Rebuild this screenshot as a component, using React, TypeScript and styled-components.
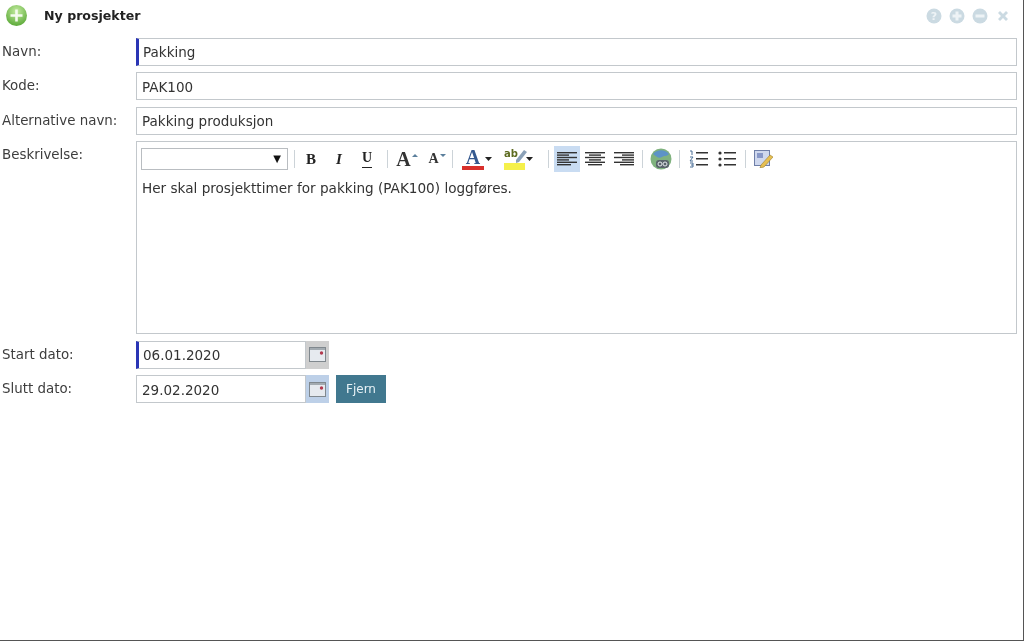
import { ReactNode } from 'react'
import styled, { createGlobalStyle } from 'styled-components'

const GlobalStyle = createGlobalStyle`
  html, body { margin: 0; padding: 0; background: #fff; }
  body { font-family: "DejaVu Sans", Verdana, sans-serif; color: #333; }
`

const Page = styled.div`
  box-sizing: border-box;
  width: 1024px;
  height: 641px;
  overflow: hidden;
  background: #fff;
  border-right: 1px solid #555;
  border-bottom: 1px solid #555;
  filter: blur(0.5px);
`

const TitleBar = styled.header`
  display: flex;
  align-items: center;
  height: 31px;
  padding: 0 12px 0 6px;
`

const TitleText = styled.h1`
  margin: 0 0 0 17px;
  font-size: 12.6px;
  font-weight: 700;
  color: #222;
  flex: 1;
`

const WindowTools = styled.div`
  display: flex;
  gap: 7px;
`

const Form = styled.form`
  display: grid;
  grid-template-columns: 134px 881px;
  row-gap: 6.5px;
  padding: 6.8px 0 0 2px;
`

const Label = styled.label`
  height: 28px;
  font-size: 13.4px;
  line-height: 28px;
  color: #3d3d3d;
`

const InputBox = styled.div<{ $required?: boolean; $width?: number }>`
  box-sizing: border-box;
  height: 28px;
  width: ${p => (p.$width ? `${p.$width}px` : '100%')};
  display: flex;
  align-items: center;
  padding: 1px 0 0 ${p => (p.$required ? '4px' : '5px')};
  background: #fff;
  border: 1px solid #c3c8cc;
  border-left: ${p => (p.$required ? '3px solid #2a35b5' : '1px solid #c3c8cc')};
  font-size: 13.5px;
  color: #333;
`

const EditorBox = styled.div`
  box-sizing: border-box;
  height: 193px;
  border: 1px solid #c3c8cc;
  padding: 3px 4px;
`

const Toolbar = styled.div`
  display: flex;
  align-items: center;
  height: 27px;
`

const FontSelect = styled.div`
  box-sizing: border-box;
  width: 147px;
  height: 22px;
  border: 1px solid #b9bdc1;
  display: flex;
  align-items: center;
  justify-content: flex-end;
  padding-right: 6px;
  font-size: 10px;
  color: #111;
`

const Separator = styled.span<{ $left: number; $right: number }>`
  width: 1px;
  height: 18px;
  background: #ccd3d8;
  margin: 0 ${p => p.$right}px 0 ${p => p.$left}px;
`

const ToolButton = styled.span<{ $width: number; $active?: boolean; $pad?: number }>`
  box-sizing: border-box;
  width: ${p => p.$width}px;
  height: 26px;
  padding-left: ${p => p.$pad ?? 0}px;
  display: flex;
  align-items: center;
  justify-content: center;
  gap: 1px;
  background: ${p => (p.$active ? '#c9dcf2' : 'transparent')};
`

const Glyph = styled.span<{ $size: number; $italic?: boolean; $underline?: boolean; $color?: string }>`
  font-family: "Liberation Serif", serif;
  font-weight: 700;
  font-size: ${p => p.$size}px;
  line-height: 18px;
  font-style: ${p => (p.$italic ? 'italic' : 'normal')};
  color: ${p => p.$color ?? '#222'};
  border-bottom: ${p => (p.$underline ? '1.5px solid #222' : '0')};
`

const ColorGlyph = styled.span`
  display: block;
  width: 22px;
  height: 22px;
  box-sizing: border-box;
  border-bottom: 4px solid #d8302c;
  font-family: "Liberation Serif", serif;
  font-weight: 700;
  font-size: 20px;
  line-height: 18px;
  text-align: center;
  color: #35598f;
`

const MarkerGlyph = styled.span`
  position: relative;
  display: block;
  width: 21px;
  height: 22px;
  box-sizing: border-box;
  border-bottom: 7px solid #f5f04a;
  font-size: 10px;
  line-height: 12px;
  font-weight: 700;
  color: #5d6b20;
`

const MarkerPen = styled.svg`
  position: absolute;
  top: 1px;
  left: 11px;
`

const EditorText = styled.p`
  margin: 8px 0 0 1px;
  font-size: 13.6px;
  color: #333;
`

const DateRow = styled.div`
  display: flex;
  align-items: center;
`

const CalendarButton = styled.span<{ $focused?: boolean }>`
  box-sizing: border-box;
  width: 23px;
  height: 28px;
  display: flex;
  align-items: center;
  justify-content: center;
  background: ${p => (p.$focused ? '#bdd0e8' : '#cfcfcf')};
`

const RemoveButton = styled.button`
  width: 50px;
  height: 28px;
  margin-left: 7px;
  padding: 0;
  border: 0;
  background: #41788f;
  color: #e8f2f6;
  font-family: inherit;
  font-size: 12px;
`

const WindowIcon = ({ children }: { children: ReactNode }) => (
  <svg width="16" height="16" viewBox="0 0 16 16">
    {children}
  </svg>
)

const Calendar = () => (
  <svg width="17" height="15" viewBox="0 0 17 15">
    <rect x="0.5" y="0.5" width="16" height="14" fill="#e6eaef" stroke="#80888e" />
    <rect x="1" y="1" width="15" height="2" fill="#a3abb1" />
    <circle cx="12.5" cy="6" r="1.7" fill="#b23a4e" />
  </svg>
)

const Lines = ({ rows }: { rows: [number, number][] }) => (
  <svg width="20" height="16" viewBox="0 0 20 16">
    {rows.map(([x, w], i) => (
      <rect key={i} x={x} y={1 + i * 2.4} width={w} height="1.4" fill="#333" />
    ))}
  </svg>
)

const alignLeft: [number, number][] = [[0, 20], [0, 12], [0, 20], [0, 12], [0, 20], [0, 14]]
const alignCenter: [number, number][] = [[0, 20], [4, 12], [0, 20], [4, 12], [0, 20], [3, 14]]
const alignRight: [number, number][] = [[0, 20], [8, 12], [0, 20], [8, 12], [0, 20], [6, 14]]

const Caret = () => (
  <svg width="7" height="4" viewBox="0 0 7 4">
    <path d="M0 0h7L3.5 4z" fill="#222" />
  </svg>
)

const SizeArrow = ({ down }: { down?: boolean }) => (
  <svg width="6" height="12" viewBox="0 0 6 12">
    <path d={down ? 'M0 1h6L3 4z' : 'M0 4l3-3 3 3z'} fill="#5b7f9c" />
  </svg>
)

export default function App() {
  return (
    <>
      <GlobalStyle />
      <Page>
        <TitleBar>
          <svg width="21" height="21" viewBox="0 0 21 21">
            <defs>
              <radialGradient id="green" cx="50%" cy="30%" r="75%">
                <stop offset="0" stopColor="#c4eca0" />
                <stop offset="1" stopColor="#55a532" />
              </radialGradient>
            </defs>
            <circle cx="10.5" cy="10.5" r="10.5" fill="url(#green)" />
            <path d="M9.2 4.5h2.6v4.7h4.7v2.6h-4.7v4.7H9.2v-4.7H4.5V9.2h4.7z" fill="#f4fbee" />
          </svg>
          <TitleText>Ny prosjekter</TitleText>
          <WindowTools>
            <WindowIcon>
              <circle cx="8" cy="8" r="7.5" fill="#cbdae2" />
              <text x="8" y="12" fontSize="11" fontWeight="700" textAnchor="middle" fill="#eef3f6">?</text>
            </WindowIcon>
            <WindowIcon>
              <circle cx="8" cy="8" r="7.5" fill="#cbdae2" />
              <path d="M6.5 3.5h3v3h3v3h-3v3h-3v-3h-3v-3h3z" fill="#eef3f6" />
            </WindowIcon>
            <WindowIcon>
              <circle cx="8" cy="8" r="7.5" fill="#cbdae2" />
              <rect x="3.5" y="6.5" width="9" height="3" fill="#eef3f6" />
            </WindowIcon>
            <WindowIcon>
              <path d="M3 5l2-2 3 3 3-3 2 2-3 3 3 3-2 2-3-3-3 3-2-2 3-3z" fill="#cbdae2" />
            </WindowIcon>
          </WindowTools>
        </TitleBar>
        <Form>
          <Label>Navn:</Label>
          <InputBox $required>Pakking</InputBox>
          <Label>Kode:</Label>
          <InputBox>PAK100</InputBox>
          <Label>Alternative navn:</Label>
          <InputBox>Pakking produksjon</InputBox>
          <Label>Beskrivelse:</Label>
          <EditorBox>
            <Toolbar>
              <FontSelect>▼</FontSelect>
              <Separator $left={6} $right={2} />
              <ToolButton $width={28}>
                <Glyph $size={15}>B</Glyph>
              </ToolButton>
              <ToolButton $width={28}>
                <Glyph $size={15} $italic>I</Glyph>
              </ToolButton>
              <ToolButton $width={28}>
                <Glyph $size={14} $underline>U</Glyph>
              </ToolButton>
              <Separator $left={6} $right={0} />
              <ToolButton $width={32} $pad={6}>
                <Glyph $size={20} $color="#333">A</Glyph>
                <SizeArrow />
              </ToolButton>
              <ToolButton $width={28} $pad={6}>
                <Glyph $size={14} $color="#333">A</Glyph>
                <SizeArrow down />
              </ToolButton>
              <Separator $left={4} $right={6} />
              <ToolButton $width={36}>
                <ColorGlyph>A</ColorGlyph>
                <Caret />
              </ToolButton>
              <ToolButton $width={47}>
                <MarkerGlyph>
                  ab
                  <MarkerPen width="13" height="14" viewBox="0 0 13 14">
                    <path d="M1 11l8-10 3 2-8 10-3 1z" fill="#8ba1b8" />
                  </MarkerPen>
                </MarkerGlyph>
                <Caret />
              </ToolButton>
              <Separator $left={6} $right={5} />
              <ToolButton $width={26} $active>
                <Lines rows={alignLeft} />
              </ToolButton>
              <ToolButton $width={30}>
                <Lines rows={alignCenter} />
              </ToolButton>
              <ToolButton $width={28}>
                <Lines rows={alignRight} />
              </ToolButton>
              <Separator $left={4} $right={6} />
              <ToolButton $width={24}>
                <svg width="22" height="22" viewBox="0 0 22 22">
                  <circle cx="11" cy="11" r="10.5" fill="#7fb27e" />
                  <path d="M3 6c4-5 12-5 16 0-3 3-4 1-7 3s-5 0-9-3z" fill="#5d93c6" />
                  <rect x="6" y="12" width="13" height="8" rx="3" fill="#59646b" />
                  <circle cx="10" cy="16" r="2" fill="none" stroke="#e5e9ec" />
                  <circle cx="15" cy="16" r="2" fill="none" stroke="#e5e9ec" />
                </svg>
              </ToolButton>
              <Separator $left={6} $right={7} />
              <ToolButton $width={24}>
                <svg width="20" height="18" viewBox="0 0 20 18">
                  <path d="M1 1h2v4M1 7h3l-3 4h3M1 13h3v4H1M2 15h2" fill="none" stroke="#4a6f96" strokeWidth="1" />
                  <rect x="7" y="2" width="12" height="1.5" fill="#333" />
                  <rect x="7" y="8" width="12" height="1.5" fill="#333" />
                  <rect x="7" y="14" width="12" height="1.5" fill="#333" />
                </svg>
              </ToolButton>
              <ToolButton $width={31}>
                <svg width="18" height="18" viewBox="0 0 18 18">
                  <circle cx="2" cy="3" r="1.6" fill="#333" />
                  <circle cx="2" cy="9" r="1.6" fill="#333" />
                  <circle cx="2" cy="15" r="1.6" fill="#333" />
                  <rect x="6" y="2" width="12" height="1.5" fill="#333" />
                  <rect x="6" y="8" width="12" height="1.5" fill="#333" />
                  <rect x="6" y="14" width="12" height="1.5" fill="#333" />
                </svg>
              </ToolButton>
              <Separator $left={3} $right={7} />
              <ToolButton $width={20}>
                <svg width="19" height="19" viewBox="0 0 19 19">
                  <rect x="0.5" y="1.5" width="15" height="15" fill="#cfd8ee" stroke="#6f7fa8" />
                  <rect x="3" y="4" width="6" height="5" fill="#8898c8" />
                  <path d="M7 16l9-10 3 2-9 10-4 1z" fill="#e6bf52" stroke="#9d7f2c" strokeWidth="0.6" />
                </svg>
              </ToolButton>
            </Toolbar>
            <EditorText>Her skal prosjekttimer for pakking (PAK100) loggføres.</EditorText>
          </EditorBox>
          <Label>Start dato:</Label>
          <DateRow>
            <InputBox $required $width={170}>06.01.2020</InputBox>
            <CalendarButton><Calendar /></CalendarButton>
          </DateRow>
          <Label>Slutt dato:</Label>
          <DateRow>
            <InputBox $width={170}>29.02.2020</InputBox>
            <CalendarButton $focused><Calendar /></CalendarButton>
            <RemoveButton type="button">Fjern</RemoveButton>
          </DateRow>
        </Form>
      </Page>
    </>
  )
}
